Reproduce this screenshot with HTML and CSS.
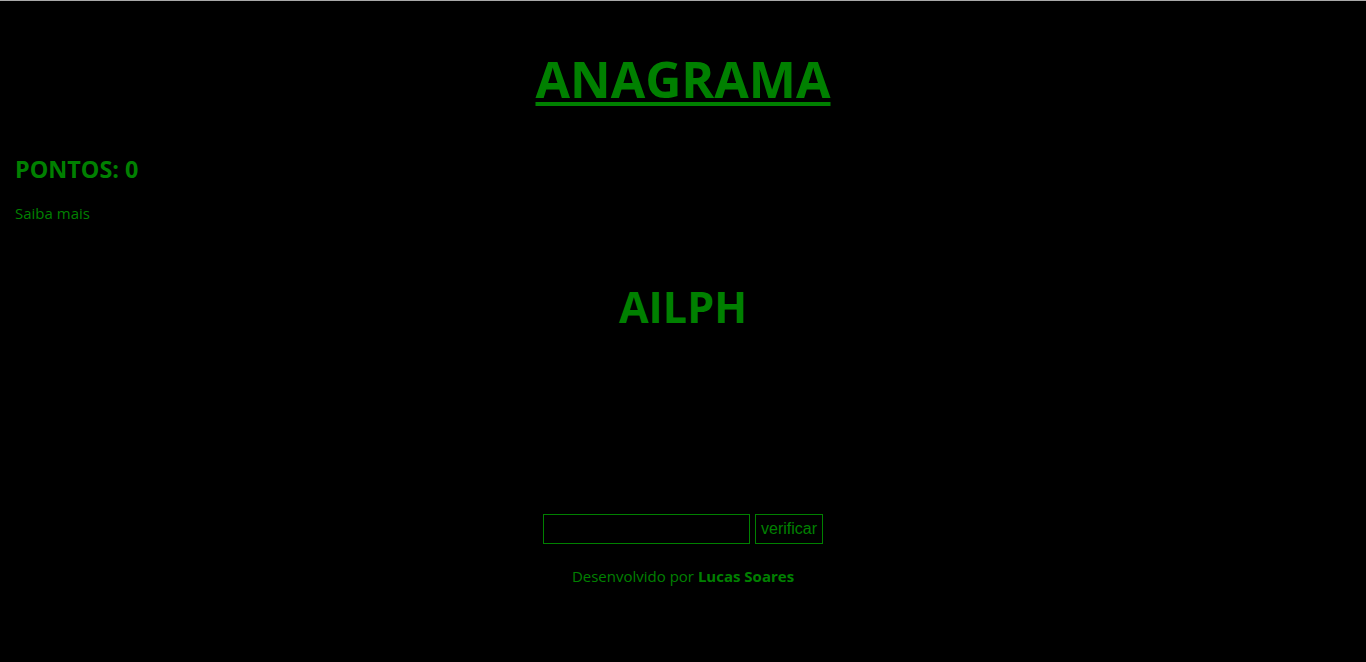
FILE: index.html
```html
<!DOCTYPE html>
<html lang="pt">
<head>
<meta charset="utf-8">
<title>Anagrama</title>
<link rel="stylesheet" href="styles.css">
</head>
<body>
<div class="page">
  <h1 class="title"><a href="#">ANAGRAMA</a></h1>
  <div class="side">
    <h2 class="score">PONTOS: 0</h2>
    <a class="more" href="#">Saiba mais</a>
  </div>
  <div class="word">AILPH</div>
  <form class="form">
    <input class="field" type="text">
    <button class="btn" type="button">verificar</button>
  </form>
  <p class="footer">Desenvolvido por <strong>Lucas Soares</strong></p>
</div>
</body>
</html>
```
FILE: styles.css
```css
html, body {
  margin: 0;
  padding: 0;
  background: #000;
  height: 100%;
}
body {
  border-top: 1px solid #a9a9a9;
  box-sizing: border-box;
  font-family: "Open Sans", "Noto Sans", sans-serif;
  color: #008000;
}
.page {
  padding: 0 15px;
}
.title {
  margin: 0;
  padding-top: 48px;
  text-align: center;
  font-size: 50px;
  line-height: 60px;
  font-weight: 700;
}
.title a {
  color: #008000;
  text-decoration: underline;
  text-decoration-thickness: 4px;
  text-underline-offset: 4px;
}
.side {
  margin-top: 45px;
}
.score {
  margin: 0;
  font-size: 23.4px;
  line-height: 30px;
  font-weight: 700;
}
.more {
  display: block;
  margin-top: 19px;
  font-size: 15px;
  line-height: 20px;
  color: #008000;
  text-decoration: none;
}
.word {
  margin-top: 54px;
  text-align: center;
  font-size: 43px;
  line-height: 60px;
  font-weight: 700;
}
.form {
  margin-top: 177px;
  display: flex;
  justify-content: center;
  gap: 5px;
}
.field {
  width: 207px;
  height: 30px;
  box-sizing: border-box;
  background: #000;
  border: 1px solid #008000;
  color: #008000;
  padding: 0 4px;
  margin: 0;
}
.btn {
  height: 30px;
  box-sizing: border-box;
  background: #000;
  border: 1px solid #008000;
  color: #008000;
  font-family: "Liberation Sans", Arial, sans-serif;
  font-size: 16px;
  padding: 0 5px;
  margin: 0;
}
.footer {
  margin: 21px 0 0;
  text-align: center;
  font-size: 15px;
  line-height: 22px;
}
.footer strong {
  font-weight: 700;
}
```
